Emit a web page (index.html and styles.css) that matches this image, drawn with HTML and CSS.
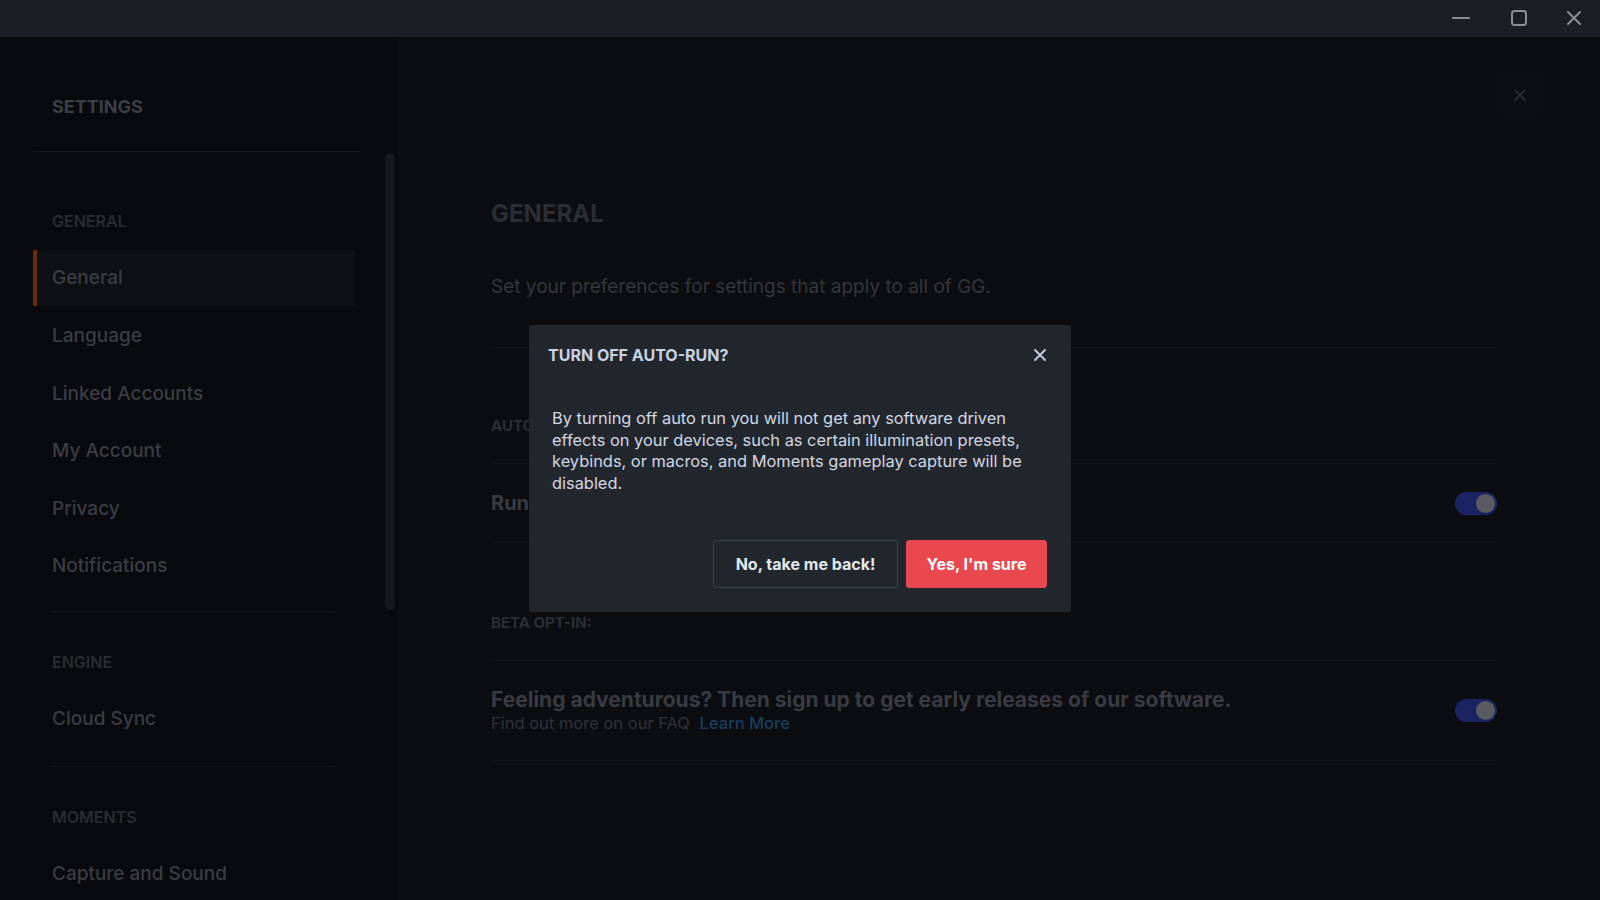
FILE: index.html
```html
<!DOCTYPE html>
<html lang="en">
<head>
<meta charset="utf-8">
<title>Settings</title>
<link rel="stylesheet" href="styles.css">
</head>
<body>
<div class="titlebar">
  <div class="win-btn">
    <svg width="18" height="18" viewBox="0 0 18 18"><path d="M1 9h16" stroke="#8b8e94" stroke-width="2" stroke-linecap="round"/></svg>
  </div>
  <div class="win-btn win-max">
    <svg width="18" height="18" viewBox="0 0 18 18"><rect x="2" y="2" width="14" height="14" rx="2.5" fill="none" stroke="#8b8e94" stroke-width="2"/></svg>
  </div>
  <div class="win-btn win-close">
    <svg width="16" height="16" viewBox="0 0 16 16"><path d="M2 2l12 12M14 2L2 14" stroke="#8b8e94" stroke-width="2" stroke-linecap="round"/></svg>
  </div>
</div>

<div class="app">
  <aside class="sidebar">
    <nav class="nav">
      <div class="nav-head">SETTINGS</div>
      <div class="nav-section first">
        <div class="nav-label">GENERAL</div>
        <div class="nav-item active">General</div>
        <div class="nav-item">Language</div>
        <div class="nav-item">Linked Accounts</div>
        <div class="nav-item">My Account</div>
        <div class="nav-item">Privacy</div>
        <div class="nav-item">Notifications</div>
      </div>
      <div class="nav-section">
        <div class="nav-label">ENGINE</div>
        <div class="nav-item">Cloud Sync</div>
      </div>
      <div class="nav-section last">
        <div class="nav-label">MOMENTS</div>
        <div class="nav-item">Capture and Sound</div>
      </div>
    </nav>
    <div class="scroll-track"><div class="scroll-thumb"></div></div>
  </aside>

  <main class="content">
    <div class="panel-close">
      <svg width="14" height="14" viewBox="0 0 14 14"><path d="M2 2l10 10M12 2L2 12" stroke="#2e3136" stroke-width="1.6" stroke-linecap="round"/></svg>
    </div>
    <h1 class="page-title">GENERAL</h1>
    <p class="page-desc">Set your preferences for settings that apply to all of GG.</p>

    <section class="group">
      <div class="group-label">AUTO-RUN:</div>
      <div class="row row-run">
        <div class="row-text">
          <div class="row-title">Run GG automatically when your computer starts.</div>
        </div>
        <div class="toggle"><div class="knob"></div></div>
      </div>
    </section>

    <section class="group">
      <div class="group-label">BETA OPT-IN:</div>
      <div class="row row-beta">
        <div class="row-text">
          <div class="row-title">Feeling adventurous? Then sign up to get early releases of our software.</div>
          <div class="row-sub">Find out more on our FAQ <span class="link">Learn More</span></div>
        </div>
        <div class="toggle"><div class="knob"></div></div>
      </div>
    </section>
  </main>
</div>

<div class="overlay">
  <div class="modal">
    <div class="modal-head">
      <div class="modal-title">TURN OFF AUTO-RUN?</div>
      <svg class="modal-x" width="14" height="14" viewBox="0 0 14 14"><path d="M2 2l10 10M12 2L2 12" stroke="#c3cad6" stroke-width="2" stroke-linecap="round"/></svg>
    </div>
    <p class="modal-body">By turning off auto run you will not get any software driven effects on your devices, such as certain illumination presets, keybinds, or macros, and Moments gameplay capture will be disabled.</p>
    <div class="modal-actions">
      <button class="btn btn-secondary">No, take me back!</button>
      <button class="btn btn-danger">Yes, I'm sure</button>
    </div>
  </div>
</div>
</body>
</html>
```

FILE: styles.css
```css
* { box-sizing: border-box; }

html, body {
  margin: 0;
  padding: 0;
}

body {
  width: 1600px;
  height: 900px;
  overflow: hidden;
  background: #0b0d10;
  font-family: Inter, "Noto Sans", "Liberation Sans", sans-serif;
  color: #3a3d44;
}

.titlebar {
  height: 37px;
  background: #1b1e24;
  display: flex;
  justify-content: flex-end;
  align-items: center;
}

.win-btn {
  width: 57px;
  height: 37px;
  padding-bottom: 2px;
  display: flex;
  align-items: center;
  justify-content: center;
}

.win-btn.win-max {
  width: 59px;
}

.win-btn.win-close {
  width: 52px;
}

.app {
  display: flex;
  height: 863px;
}

/* Sidebar */
.sidebar {
  width: 398px;
  flex: none;
  background: #090a0d;
  display: flex;
}

.nav {
  flex: 1;
  padding-left: 33px;
}

.nav-head {
  height: 115px;
  padding: 59px 0 0 19px;
  font-size: 18px;
  line-height: 22px;
  font-weight: 700;
  color: #3b3e45;
  border-bottom: 1px solid #131519;
  margin-right: 25px;
}

.nav-section {
  margin-left: 19px;
  margin-right: 50px;
  padding-top: 40px;
  padding-bottom: 18px;
  border-bottom: 1px solid #131519;
}

.nav-section.first {
  padding-top: 59px;
  padding-bottom: 16px;
}

.nav-section.last {
  border-bottom: none;
}

.nav-label {
  font-size: 16px;
  line-height: 20px;
  font-weight: 600;
  color: #2a2c31;
  margin-bottom: 18.5px;
}

.nav-item {
  height: 57.5px;
  display: flex;
  align-items: center;
  font-size: 19px;
  font-weight: 500;
  color: #3a3d44;
}

.nav-item.active {
  height: 56px;
  margin-bottom: 1.5px;
  margin-left: -19px;
  margin-right: -20px;
  padding-left: 15px;
  background: #0e1013;
  border-left: 4px solid #6b2d0d;
  border-radius: 2px;
}

.scroll-track {
  width: 10px;
  margin-right: 3px;
  flex: none;
}

.scroll-thumb {
  margin-top: 116px;
  height: 457px;
  border-radius: 5px;
  background: #17181c;
}

/* Main content */
.content {
  flex: 1;
  position: relative;
  padding: 162px 103px 0 93px;
}

.panel-close {
  position: absolute;
  top: 35px;
  right: 57px;
  width: 46px;
  height: 46px;
  display: flex;
  align-items: center;
  justify-content: center;
  background: #0c0e11;
}

.page-title {
  margin: 0;
  font-size: 24px;
  line-height: 30px;
  font-weight: 700;
  color: #2b2e34;
}

.page-desc {
  margin: 46px 0 0;
  padding-bottom: 48px;
  font-size: 19px;
  line-height: 24px;
  color: #33363c;
  border-bottom: 1px solid #121418;
}

.group-label {
  margin-top: 68px;
  font-size: 15px;
  line-height: 20px;
  font-weight: 700;
  color: #2b2e34;
}

.group + .group .group-label {
  margin-top: 70px;
}

.row {
  margin-top: 27px;
  border-top: 1px solid #121418;
  border-bottom: 1px solid #121418;
  display: flex;
  align-items: center;
  justify-content: space-between;
}

.row-run {
  height: 80px;
}

.row-beta {
  padding: 26px 0;
}

.row-title {
  font-size: 20px;
  line-height: 26px;
  font-weight: 700;
  color: #383b42;
}

.row-beta .row-title {
  font-size: 21px;
}

.row-sub {
  font-size: 16.5px;
  line-height: 21px;
  color: #2f3238;
}

.link {
  margin-left: 5px;
  color: #1b3f5e;
  font-weight: 500;
}

.toggle {
  width: 42px;
  height: 23px;
  border-radius: 12px;
  background: #1c2362;
  display: flex;
  justify-content: flex-end;
  align-items: center;
  padding-right: 2px;
  flex: none;
}

.knob {
  width: 19px;
  height: 19px;
  border-radius: 50%;
  background: #5a5b61;
}

/* Modal */
.overlay {
  position: fixed;
  top: 37px;
  left: 0;
  right: 0;
  bottom: 0;
  display: flex;
  align-items: center;
  justify-content: center;
}

.modal {
  width: 542px;
  height: 287px;
  background: #22272e;
  border-radius: 3px;
  padding: 20px 24px 24px 19px;
  display: flex;
  flex-direction: column;
}

.modal-head {
  display: flex;
  justify-content: space-between;
  align-items: center;
  height: 20px;
}

.modal-title {
  font-size: 16px;
  line-height: 20px;
  font-weight: 700;
  color: #c8d2e3;
}

.modal-body {
  margin: 43px 0 0 4px;
  font-size: 16.4px;
  line-height: 21.5px;
  color: #d2d8e2;
}

.modal-actions {
  margin-top: auto;
  display: flex;
  justify-content: flex-end;
  gap: 8px;
}

.btn {
  height: 48px;
  padding: 0 16px;
  border-radius: 3px;
  font-family: Inter, "Noto Sans", "Liberation Sans", sans-serif;
  font-size: 16px;
  font-weight: 700;
  white-space: nowrap;
  cursor: pointer;
}

.btn-secondary {
  width: 185px;
  background: #22272e;
  border: 1px solid #3d434c;
  color: #e4e8ef;
}

.btn-danger {
  width: 141px;
  background: #e8484e;
  border: 1px solid #e8484e;
  color: #ffffff;
}
```
